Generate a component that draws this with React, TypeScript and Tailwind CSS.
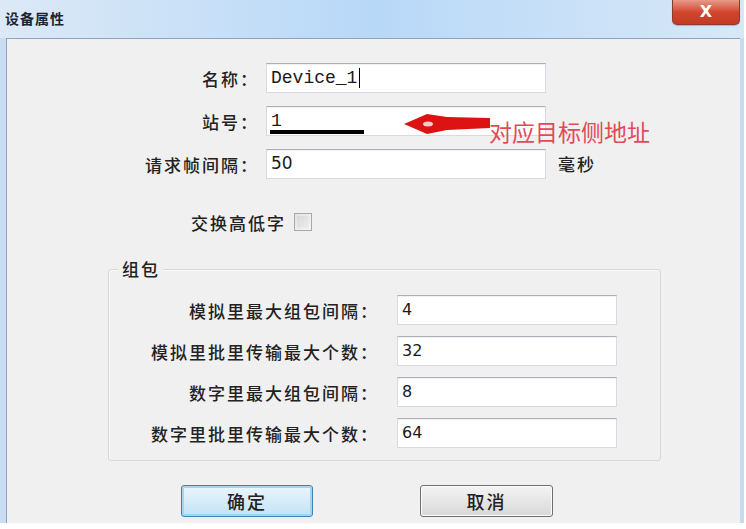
import React from "react";

const cjk = { fontFamily: '"Noto Sans CJK SC", "Noto Sans", sans-serif' };
const mono = { fontFamily: '"Liberation Mono", "DejaVu Sans Mono", monospace' };
const sans = { fontFamily: '"DejaVu Sans", "Noto Sans", sans-serif' };

function Field({ value, className, font = sans, children }: { value: string; className: string; font?: React.CSSProperties; children?: React.ReactNode }) {
  return (
    <div
      className={`relative flex items-center bg-white border border-[#d6dbe1] border-t-[#abb0b8] shadow-[inset_0_1px_1px_rgba(0,0,0,0.06)] ${className}`}
    >
      <span className="pl-[4px] text-[#1a1a1a]" style={font}>
        {value}
      </span>
      {children}
    </div>
  );
}

function Label({ text, className }: { text: string; className: string }) {
  return (
    <div className={`text-right text-[17px] font-medium tracking-[2px] text-[#222] leading-none ${className}`} style={cjk}>
      {text}
    </div>
  );
}

export default function App() {
  return (
    <div className="w-[746px] h-[529px] bg-white overflow-hidden">
      <div className="w-[744px] h-[523px] flex flex-col bg-gradient-to-r from-[#c9dcf0] via-[#bcd9f6] to-[#c5dbf0]">
        {/* title bar */}
        <div className="h-[38px] flex items-start justify-between bg-gradient-to-r from-[#dce9f6] via-[#b8d8f8] to-[#d8e8f7]">
          <div className="pl-[5px] pt-[8px] text-[14px] font-bold text-[#1c2430] tracking-[1px]" style={cjk}>
            设备属性
          </div>
          <div className="mr-[4px] w-[68px] h-[25px] rounded-b-[5px] border border-[#8a3b30] border-t-0 bg-gradient-to-b from-[#e69a88] via-[#d2452e] to-[#c23b22] flex items-center justify-center shadow-[0_1px_1px_rgba(0,0,0,0.2)]">
            <span className="text-white text-[16px] font-bold leading-none" style={sans}>X</span>
          </div>
        </div>

        {/* client area */}
        <div className="flex-1 ml-[6px] mr-[4px] bg-[#f0f0f0] border-t border-l border-[#8ea3bb] flex flex-col">
          <div className="pt-[24px] flex flex-col gap-[13px]">
            <div className="flex items-center">
              <Label text="名称：" className="w-[252px]" />
              <Field value="Device_1" className="ml-[7px] w-[280px] h-[30px] text-[18px]" font={mono}>
                <div className="w-px h-[20px] bg-black ml-[2px]" />
              </Field>
            </div>
            <div className="flex items-center">
              <Label text="站号：" className="w-[252px]" />
              <Field value="1" className="ml-[7px] w-[280px] h-[30px] text-[18px]" font={mono}>
                <div className="absolute left-[3px] bottom-[1px] w-[94px] h-[4px] bg-black" />
                <svg className="absolute left-[136px] top-[5px]" width="88" height="24" viewBox="0 0 88 24">
                  <path d="M1 12 L24 2 L44 5 L87 6 L87 16 L44 18 L24 22 Z" fill="#dd1212" />
                  <ellipse cx="25" cy="12" rx="5" ry="2.5" fill="#f7c9c9" />
                </svg>
                <div className="absolute left-[222px] top-[13px] whitespace-nowrap text-[23px] leading-none text-[#e34a57]" style={cjk}>
                  对应目标侧地址
                </div>
              </Field>
            </div>
            <div className="flex items-center">
              <Label text="请求帧间隔：" className="w-[252px]" />
              <Field value="50" className="ml-[7px] w-[280px] h-[30px] text-[17px]" />
              <div className="ml-[12px] text-[17px] font-medium tracking-[2px] text-[#222]" style={cjk}>
                毫秒
              </div>
            </div>
          </div>

          <div className="mt-[34px] ml-[184px] flex items-center">
            <div className="text-[17px] font-medium tracking-[2px] text-[#222] leading-none" style={cjk}>
              交换高低字
            </div>
            <div className="ml-[8px] w-[18px] h-[18px] border border-[#a9a9a9] bg-gradient-to-br from-[#e2e2e2] to-[#f6f6f6] p-[2px]">
              <div className="w-full h-full bg-gradient-to-br from-[#d9d9d9] to-[#eeeeee]" />
            </div>
          </div>

          {/* group box */}
          <div className="relative mt-[38px] ml-[101px] w-[553px] h-[192px] border border-[#d5d9dd] rounded-[3px] shadow-[inset_1px_1px_0_#fafafa]">
            <div className="absolute -top-[12px] left-[9px] px-[4px] bg-[#f0f0f0] text-[17px] font-medium tracking-[2px] text-[#222] leading-none pt-[2px]" style={cjk}>
              组包
            </div>
            <div className="pt-[25px] flex flex-col gap-[11px]">
              {[
                ["模拟里最大组包间隔：", "4"],
                ["模拟里批里传输最大个数：", "32"],
                ["数字里最大组包间隔：", "8"],
                ["数字里批里传输最大个数：", "64"],
              ].map(([l, v]) => (
                <div key={l} className="flex items-center">
                  <Label text={l} className="w-[270px]" />
                  <Field value={v} className="ml-[18px] w-[220px] h-[30px] text-[16px]" />
                </div>
              ))}
            </div>
          </div>

          {/* buttons */}
          <div className="mt-[24px] flex">
            <button
              className="ml-[174px] w-[132px] h-[32px] rounded-[3px] border border-[#3d84b5] bg-gradient-to-b from-[#eaf6fd] to-[#c4e2f4] shadow-[inset_0_0_0_2px_#9fd6f2] text-[18px] font-medium tracking-[2px] text-[#222]"
              style={cjk}
            >
              确定
            </button>
            <button
              className="ml-[107px] w-[133px] h-[32px] rounded-[3px] border border-[#707070] bg-gradient-to-b from-[#f4f4f4] to-[#d8d8d8] shadow-[inset_0_0_0_1px_#fbfbfb] text-[18px] font-medium tracking-[2px] text-[#222]"
              style={cjk}
            >
              取消
            </button>
          </div>
        </div>
      </div>
    </div>
  );
}
